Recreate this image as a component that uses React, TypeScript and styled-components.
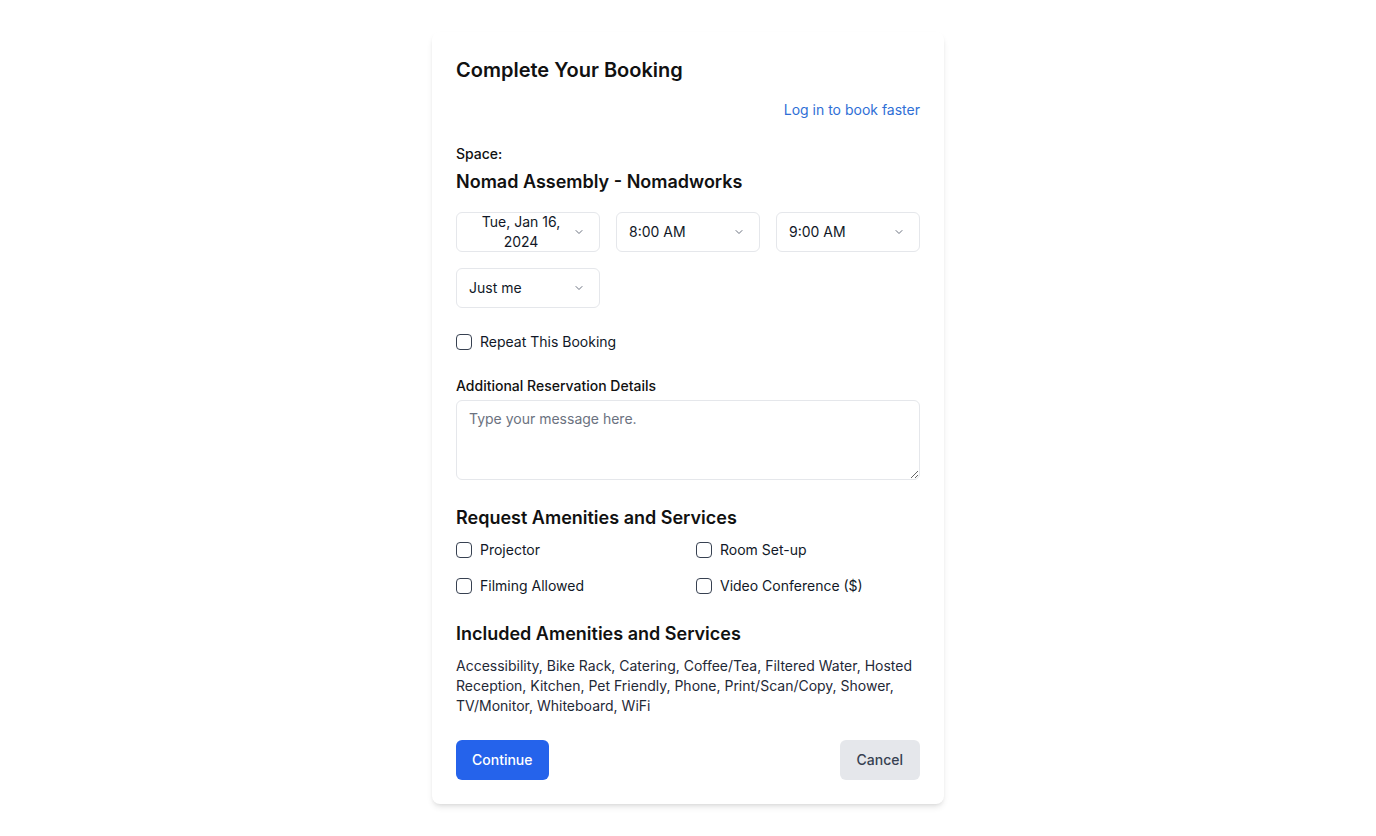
import React from 'react';
import styled, { createGlobalStyle } from 'styled-components';

const GlobalStyle = createGlobalStyle`
  * { box-sizing: border-box; }
  body {
    margin: 0;
    background: #ffffff;
    font-family: Inter, "Noto Sans", sans-serif;
    color: #111827;
  }
`;

const Chevron = () => (
  <svg width="12" height="12" viewBox="0 0 24 24" fill="none" stroke="#6b7280" strokeWidth="2" strokeLinecap="round" strokeLinejoin="round">
    <path d="m6 9 6 6 6-6" />
  </svg>
);

const included = [
  'Accessibility', 'Bike Rack', 'Catering', 'Coffee/Tea', 'Filtered Water', 'Hosted Reception',
  'Kitchen', 'Pet Friendly', 'Phone', 'Print/Scan/Copy', 'Shower', 'TV/Monitor', 'Whiteboard', 'WiFi',
];

const requested = ['Projector', 'Room Set-up', 'Filming Allowed', 'Video Conference ($)'];

const App: React.FC = () => {
  return (
    <>
      <GlobalStyle />
      <Page>
        <Card>
          <Title>Complete Your Booking</Title>
          <LoginRow>
            <LoginLink href="#">Log in to book faster</LoginLink>
          </LoginRow>

          <SpaceLabel>Space:</SpaceLabel>
          <SpaceName>Nomad Assembly - Nomadworks</SpaceName>

          <SelectGrid>
            <SelectBox $center>
              <span>Tue, Jan 16, 2024</span>
              <Chevron />
            </SelectBox>
            <SelectBox>
              <span>8:00 AM</span>
              <Chevron />
            </SelectBox>
            <SelectBox>
              <span>9:00 AM</span>
              <Chevron />
            </SelectBox>
            <SelectBox>
              <span>Just me</span>
              <Chevron />
            </SelectBox>
          </SelectGrid>

          <RepeatRow>
            <Box />
            Repeat This Booking
          </RepeatRow>

          <FieldLabel>Additional Reservation Details</FieldLabel>
          <Message placeholder="Type your message here." />

          <SectionTitle>Request Amenities and Services</SectionTitle>
          <AmenityGrid>
            {requested.map(item => (
              <CheckRow key={item}>
                <Box />
                {item}
              </CheckRow>
            ))}
          </AmenityGrid>

          <SectionTitle>Included Amenities and Services</SectionTitle>
          <IncludedText>{included.join(', ')}</IncludedText>

          <Actions>
            <PrimaryButton>Continue</PrimaryButton>
            <SecondaryButton>Cancel</SecondaryButton>
          </Actions>
        </Card>
      </Page>
    </>
  );
};

export default App;

const Page = styled.div`
  display: flex;
  justify-content: center;
  padding: 32px 0;
`;

const Card = styled.div`
  width: 512px;
  padding: 24px;
  background: #fff;
  border-radius: 8px;
  box-shadow: 0 4px 6px -1px rgba(0, 0, 0, 0.1), 0 2px 4px -2px rgba(0, 0, 0, 0.1);
  display: flex;
  flex-direction: column;
`;

const Title = styled.h2`
  margin: 0;
  font-size: 20px;
  line-height: 28px;
  font-weight: 600;
  color: #111;
`;

const LoginRow = styled.div`
  display: flex;
  justify-content: flex-end;
  margin-top: 16px;
`;

const LoginLink = styled.a`
  font-size: 14px;
  line-height: 20px;
  color: #2f6fd6;
  text-decoration: none;
`;

const SpaceLabel = styled.div`
  margin-top: 24px;
  font-size: 14px;
  line-height: 20px;
  font-weight: 500;
  color: #111;
`;

const SpaceName = styled.div`
  margin-top: 4px;
  font-size: 18px;
  line-height: 28px;
  font-weight: 600;
  color: #111;
`;

const SelectGrid = styled.div`
  margin-top: 16px;
  display: grid;
  grid-template-columns: repeat(3, 1fr);
  gap: 16px;
`;

const SelectBox = styled.div<{ $center?: boolean }>`
  height: 40px;
  display: flex;
  align-items: center;
  justify-content: space-between;
  gap: ${p => (p.$center ? '0' : '8px')};
  padding: 0 14px 0 12px;
  border: 1px solid #e5e7eb;
  border-radius: 6px;
  font-size: 14px;
  line-height: 20px;
  color: #111827;
  background: #fff;

  span {
    flex: 1;
    text-align: ${p => (p.$center ? 'center' : 'left')};
  }
`;

const Box = styled.span`
  width: 16px;
  height: 16px;
  flex-shrink: 0;
  border: 1px solid #374151;
  border-radius: 4px;
  background: #fff;
`;

const CheckRow = styled.label`
  display: flex;
  align-items: center;
  gap: 8px;
  font-size: 14px;
  line-height: 20px;
  color: #111827;
`;

const RepeatRow = styled(CheckRow)`
  margin-top: 24px;
`;

const FieldLabel = styled.div`
  margin-top: 24px;
  font-size: 14px;
  line-height: 20px;
  font-weight: 500;
  color: #111;
`;

const Message = styled.textarea`
  margin-top: 4px;
  height: 80px;
  width: 100%;
  display: block;
  padding: 8px 12px;
  border: 1px solid #e5e7eb;
  border-radius: 6px;
  font-family: Inter, sans-serif;
  font-size: 14px;
  line-height: 20px;
  color: #111827;
  outline: none;

  &::placeholder {
    color: #6b7280;
  }
`;

const SectionTitle = styled.h3`
  margin: 24px 0 0;
  font-size: 18px;
  line-height: 28px;
  font-weight: 600;
  color: #111;
`;

const AmenityGrid = styled.div`
  margin-top: 8px;
  display: grid;
  grid-template-columns: 1fr 1fr;
  gap: 16px;
`;

const IncludedText = styled.p`
  margin: 8px 0 0;
  font-size: 14px;
  line-height: 20px;
  color: #1f2937;
`;

const Actions = styled.div`
  margin-top: 24px;
  display: flex;
  justify-content: space-between;
`;

const ButtonBase = styled.button`
  height: 40px;
  padding: 0 16px;
  border: none;
  border-radius: 6px;
  font-family: Inter, sans-serif;
  font-size: 14px;
  line-height: 20px;
  font-weight: 500;
  cursor: pointer;
`;

const PrimaryButton = styled(ButtonBase)`
  background: #2563eb;
  color: #fff;
`;

const SecondaryButton = styled(ButtonBase)`
  padding: 0 17px;
  background: #e5e7eb;
  color: #374151;
`;
